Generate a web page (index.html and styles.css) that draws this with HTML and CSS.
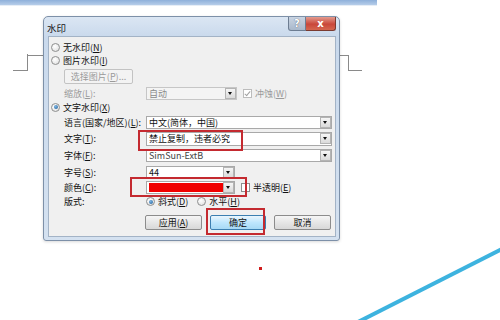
FILE: index.html
```html
<!DOCTYPE html>
<html lang="zh-CN">
<head>
    <meta charset="UTF-8">
    <meta name="viewport" content="width=device-width, initial-scale=1.0">
    <title>水印</title>
    <link rel="stylesheet" href="styles.css">
</head>
<body>
    <div class="topbar"></div>

    <!-- page corner marks of the document behind the dialog -->
    <div class="mark mark-left"></div>
    <div class="mark mark-right"></div>

    <div class="dialog">
        <div class="titlebar">
            <span class="title">水印</span>
            <div class="caption">
                <span class="cap-btn help">?</span>
                <span class="cap-btn close">x</span>
            </div>
        </div>

        <div class="client">
            <div class="opt r1"><span class="radio"></span>无水印(<u>N</u>)</div>
            <div class="opt r2"><span class="radio"></span>图片水印(<u>I</u>)</div>
            <div class="row r-btn">
                <span class="btn disabled">选择图片(<u>P</u>)...</span>
            </div>
            <div class="row r-zoom">
                <span class="label disabled-text">缩放(<u>L</u>):</span>
                <div class="combo short off"><span class="val">自动</span><span class="arrow"></span></div>
                <span class="check checked off"></span>
                <span class="disabled-text">冲蚀(<u>W</u>)</span>
            </div>
            <div class="opt r-text"><span class="radio on"></span>文字水印(<u>X</u>)</div>
            <div class="row r-lang">
                <span class="label">语言(国家/地区)(<u>L</u>):</span>
                <div class="combo"><span class="val">中文(简体，中国)</span><span class="arrow"></span></div>
            </div>
            <div class="row r-word">
                <span class="label">文字(<u>T</u>):</span>
                <div class="combo tall"><span class="val">禁止复制，违者必究</span><span class="arrow"></span></div>
            </div>
            <div class="row r-font">
                <span class="label">字体(<u>F</u>):</span>
                <div class="combo"><span class="val mono">SimSun-ExtB</span><span class="arrow"></span></div>
            </div>
            <div class="row r-size">
                <span class="label">字号(<u>S</u>):</span>
                <div class="combo short2"><span class="val">44</span><span class="arrow"></span></div>
            </div>
            <div class="row r-color">
                <span class="label">颜色(<u>C</u>):</span>
                <div class="combo short2"><span class="swatch"></span><span class="arrow"></span></div>
                <span class="check"></span>
                <span>半透明(<u>E</u>)</span>
            </div>
            <div class="row r-layout">
                <span class="label">版式:</span>
                <span class="radio on"></span><span class="rlabel">斜式(<u>D</u>)</span>
                <span class="radio"></span><span class="rlabel">水平(<u>H</u>)</span>
            </div>
            <div class="buttons">
                <span class="btn">应用(<u>A</u>)</span>
                <span class="btn default">确定</span>
                <span class="btn">取消</span>
            </div>
        </div>
    </div>

    <!-- red annotation boxes drawn over the screenshot -->
    <div class="note note-word"></div>
    <div class="note note-color"></div>
    <div class="note note-ok"></div>
    <div class="dot"></div>

    <svg class="stroke" width="500" height="320" viewBox="0 0 500 320">
        <line x1="502" y1="249" x2="358" y2="322" stroke="#3db3df" stroke-width="4"/>
    </svg>
</body>
</html>
```

FILE: styles.css
```css
*{
    margin: 0;
    padding: 0;
    box-sizing: border-box;
}
body{
    width: 500px;
    height: 320px;
    overflow: hidden;
    position: relative;
    background: #fff;
    font-family: "Noto Sans CJK SC", "Liberation Sans", sans-serif;
    font-size: 9px;
    color: #111;
}
u{
    text-decoration: underline;
}
.topbar{
    width: 377px;
    height: 6px;
    background: linear-gradient(#8eb0da, #b6cde9);
    border-bottom: 1px solid #e6edf6;
}
.mark{
    position: absolute;
}
.mark-left{
    left: 13px;
    top: 55px;
    width: 30px;
    height: 16px;
}
.mark-left::before{
    content: "";
    position: absolute;
    left: 0;
    top: -1px;
    width: 14px;
    height: 16px;
    border-right: 1px solid #8a8a8a;
    border-bottom: 1px solid #8a8a8a;
}
.mark-left::after{
    content: "";
    position: absolute;
    left: 14px;
    top: 0;
    width: 16px;
    border-top: 1px solid #8a8a8a;
}
.mark-right{
    left: 338px;
    top: 55px;
    width: 25px;
    height: 16px;
}
.mark-right::before{
    content: "";
    position: absolute;
    left: 0;
    top: 0;
    width: 10px;
    height: 15px;
    border-top: 1px solid #8a8a8a;
    border-right: 1px solid #8a8a8a;
}
.mark-right::after{
    content: "";
    position: absolute;
    left: 10px;
    top: 15px;
    width: 14px;
    border-top: 1px solid #8a8a8a;
}

.dialog{
    position: relative;
    margin: 10px 0 0 43px;
    width: 297px;
    height: 225px;
    border: 1px solid #7d90a8;
    border-radius: 5px 5px 3px 3px;
    background: linear-gradient(#dbe6f3, #c9d9ec 20px, #d4e1f0);
    padding: 0 3px 3px 4px;
    box-shadow: 0 1px 3px rgba(0, 0, 0, 0.15);
}
.titlebar{
    height: 19px;
    display: flex;
    justify-content: space-between;
    align-items: flex-start;
}
.title{
    margin-top: 4px;
    margin-left: -1px;
    font-size: 9.5px;
    color: #111;
}
.caption{
    display: flex;
}
.cap-btn{
    height: 14px;
    display: flex;
    align-items: center;
    justify-content: center;
    font-family: "DejaVu Sans", sans-serif;
    font-weight: bold;
    font-size: 10px;
    border: 1px solid #6d7d92;
    border-top: none;
}
.help{
    width: 18px;
    color: #fff;
    background: linear-gradient(#c9d4e2, #a9b8cb);
    border-radius: 0 0 0 3px;
    text-shadow: 0 0 1px #334;
}
.close{
    width: 30px;
    color: #fff;
    background: linear-gradient(#e49b8e, #c9473a 55%, #d5664f);
    border-left: none;
    border-color: #7a3a30;
    border-radius: 0 0 3px 0;
}

.client{
    height: 201px;
    background: #f0f0f0;
    border: 1px solid #a3b3c6;
    padding-top: 4px;
    display: flex;
    flex-direction: column;
}
.opt, .row{
    display: flex;
    align-items: center;
    white-space: nowrap;
}
.opt{
    padding-left: 2px;
}
.opt .radio{
    margin-right: 3px;
}
.r1, .r2{
    height: 13px;
}
.r-btn{
    height: 15px;
    margin-top: 2px;
    padding-left: 15px;
}
.r-zoom{
    height: 14px;
    margin-top: 2px;
}
.r-text{
    height: 14px;
}
.r-lang{
    height: 16px;
}
.r-word, .r-font, .r-size{
    height: 17px;
}
.r-color{
    height: 13px;
}
.r-layout{
    height: 15px;
}
.row .label{
    width: 97px;
    padding-left: 15px;
}
.disabled-text, .btn.disabled{
    color: #9a9a9a;
}

.radio{
    width: 9px;
    height: 9px;
    border-radius: 50%;
    border: 1px solid #8e8f8f;
    background: radial-gradient(circle at 40% 35%, #fff, #dcdcdc);
    position: relative;
    flex: none;
}
.radio.on::after{
    content: "";
    position: absolute;
    left: 1.5px;
    top: 1.5px;
    width: 4px;
    height: 4px;
    border-radius: 50%;
    background: radial-gradient(circle at 40% 35%, #7bb5e4, #1d5b94);
}
.rlabel{
    margin-left: 3px;
    margin-right: 9px;
}

.check{
    width: 9px;
    height: 9px;
    border: 1px solid #8e8f8f;
    background: #fff;
    margin: 0 3px 0 6px;
    position: relative;
    flex: none;
}
.check.off{
    border-color: #bcbcbc;
}
.check.checked::after{
    content: "";
    position: absolute;
    left: 2px;
    top: 0;
    width: 2px;
    height: 5px;
    border-right: 1px solid #a0a0a0;
    border-bottom: 1px solid #a0a0a0;
    transform: rotate(40deg);
}

.combo{
    width: 186px;
    height: 13px;
    background: #fff;
    border: 1px solid #a9a9a9;
    display: flex;
    align-items: center;
    justify-content: space-between;
    padding-left: 2px;
}
.combo.tall{
    height: 14px;
}
.combo.short{
    width: 91px;
}
.combo.short2{
    width: 89px;
}
.combo.off{
    background: #f4f4f4;
    border-color: #c6c6c6;
    color: #8a8a8a;
}
.val{
    line-height: 1;
}
.val.mono{
    color: #444;
}
.arrow{
    width: 11px;
    height: 11px;
    border: 1px solid #b4b4b4;
    background: linear-gradient(#f6f6f6, #dadada);
    position: relative;
    flex: none;
}
.arrow::after{
    content: "";
    position: absolute;
    left: 2px;
    top: 3px;
    border-left: 2.5px solid transparent;
    border-right: 2.5px solid transparent;
    border-top: 3px solid #111;
}
.swatch{
    width: 75px;
    height: 9px;
    background: #f00000;
}

.btn{
    height: 15px;
    display: inline-flex;
    align-items: center;
    justify-content: center;
    border: 1px solid #8c8c8c;
    border-radius: 2px;
    background: linear-gradient(#f6f6f6, #e6e6e6 50%, #d8d8d8);
}
.r-btn .btn{
    width: 69px;
    border-color: #c3c3c3;
    background: #f3f3f3;
}
.buttons{
    display: flex;
    justify-content: flex-end;
    gap: 8px;
    margin-top: 6px;
    padding-right: 4px;
}
.buttons .btn{
    width: 57px;
}
.btn.default{
    width: 56px;
    border-color: #3c7fb1;
    background: linear-gradient(#eaf6fd, #bee6fd 50%, #a7d9f5);
}

.note{
    position: absolute;
    border: 2px solid #c42a30;
}
.note-word{
    left: 138px;
    top: 130px;
    width: 105px;
    height: 21px;
}
.note-color{
    left: 130px;
    top: 177px;
    width: 117px;
    height: 20px;
}
.note-ok{
    left: 206px;
    top: 208px;
    width: 59px;
    height: 27px;
}
.dot{
    position: absolute;
    left: 259px;
    top: 267px;
    width: 3px;
    height: 3px;
    background: #d01c1c;
}
.stroke{
    position: absolute;
    left: 0;
    top: 0;
}
```
